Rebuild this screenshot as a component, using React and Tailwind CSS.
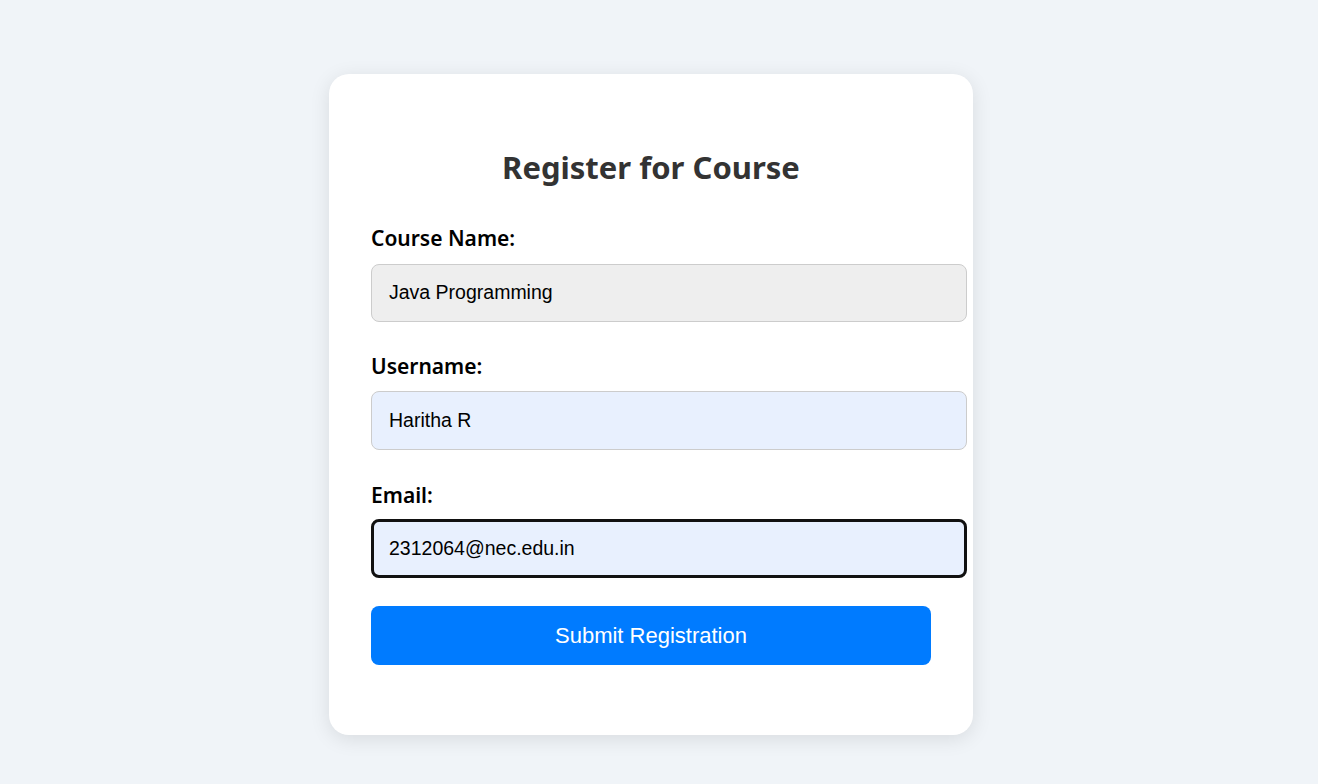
export default function App() {
  const head = "font-['Noto_Sans','Open_Sans',sans-serif]";
  const arial = "font-['Liberation_Sans',Arial,sans-serif]";
  return (
    <div className="min-h-screen w-full bg-[#f0f4f8] flex justify-center pr-[16px] pt-[74px]">
      <div className="w-[644px] h-[661px] bg-white rounded-[20px] shadow-[0_4px_20px_rgba(0,0,0,0.1)] px-[42px] pt-[73px] flex flex-col">
        <h1 className={`${head} text-center text-[31px] leading-[40px] font-bold text-[#333]`}>
          Register for Course
        </h1>
        <label className={`${head} block mt-[39px] text-[21px] leading-[24px] font-semibold text-black`}>Course Name:</label>
        <div className={`${arial} mt-[14px] w-[596px] h-[58px] rounded-[8px] border border-[#cccccc] bg-[#eeeeee] px-[17px] flex items-center text-[19.5px] text-black`}>
          Java Programming
        </div>
        <label className={`${head} block mt-[32px] text-[21px] leading-[24px] font-semibold text-black`}>Username:</label>
        <div className={`${arial} mt-[13px] w-[596px] h-[59px] rounded-[8px] border border-[#cccccc] bg-[#e8f0fe] px-[17px] flex items-center text-[19.5px] text-black`}>
          Haritha R
        </div>
        <label className={`${head} block mt-[33px] text-[21px] leading-[24px] font-semibold text-black`}>Email:</label>
        <div className={`${arial} mt-[12px] w-[596px] h-[59px] rounded-[8px] border-[3px] border-[#111111] bg-[#e8f0fe] px-[15px] flex items-center text-[19.5px] text-black`}>
          2312064@nec.edu.in
        </div>
        <button className={`${arial} mt-[28px] w-[560px] h-[59px] rounded-[8px] bg-[#007bff] text-white text-[22px] flex items-center justify-center`}>
          Submit Registration
        </button>
      </div>
    </div>
  );
}
